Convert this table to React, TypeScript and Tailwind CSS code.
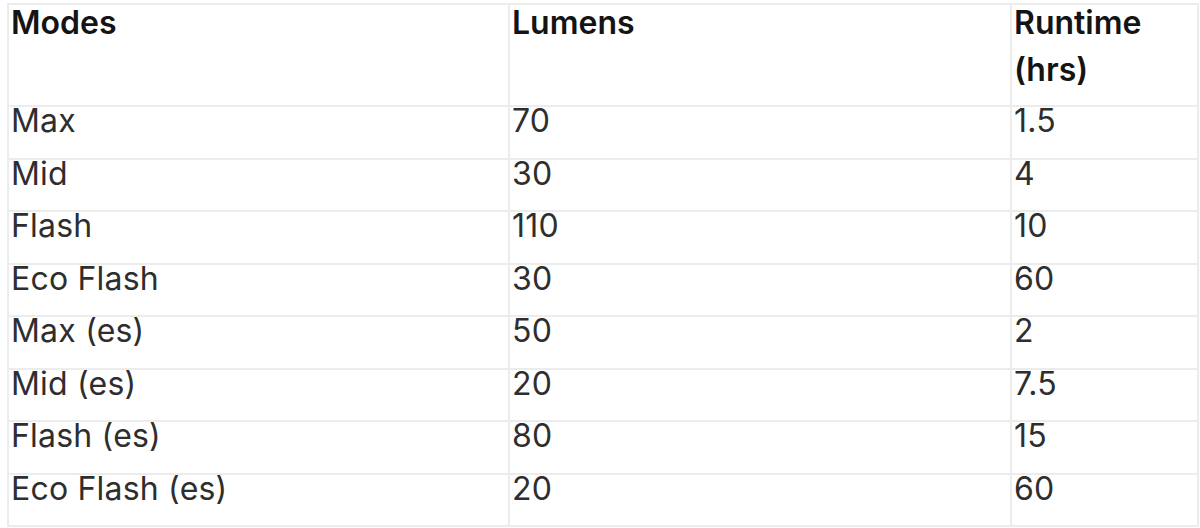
const rows: [string, string, string][] = [
  ["Max", "70", "1.5"],
  ["Mid", "30", "4"],
  ["Flash", "110", "10"],
  ["Eco Flash", "30", "60"],
  ["Max (es)", "50", "2"],
  ["Mid (es)", "20", "7.5"],
  ["Flash (es)", "80", "15"],
  ["Eco Flash (es)", "20", "60"],
];

export default function App() {
  return (
    <div className="w-[1200px] h-[528px] bg-white pt-[3px] pl-[7px] font-['Inter',sans-serif] text-[32px] text-[#2e2e2e]">
      <table className="border-collapse table-fixed w-[1190px]">
        <colgroup>
          <col className="w-[501px]" />
          <col className="w-[502px]" />
          <col className="w-[187px]" />
        </colgroup>
        <thead>
          <tr className="h-[102px]">
            {["Modes", "Lumens", "Runtime (hrs)"].map((h) => (
              <th
                key={h}
                className="border-2 border-[#ececec] align-top text-left font-semibold text-[#141414] px-[2px] p-0"
              >
                <div className="-mt-[6px] leading-[47px]">{h}</div>
              </th>
            ))}
          </tr>
        </thead>
        <tbody>
          {rows.map((r) => (
            <tr key={r[0]} className="h-[52.5px]">
              {r.map((c, i) => (
                <td
                  key={i}
                  className="border-2 border-[#ececec] align-top px-[2px] py-0 leading-[28px] tracking-[0.2px]"
                >
                  {c}
                </td>
              ))}
            </tr>
          ))}
        </tbody>
      </table>
    </div>
  );
}
